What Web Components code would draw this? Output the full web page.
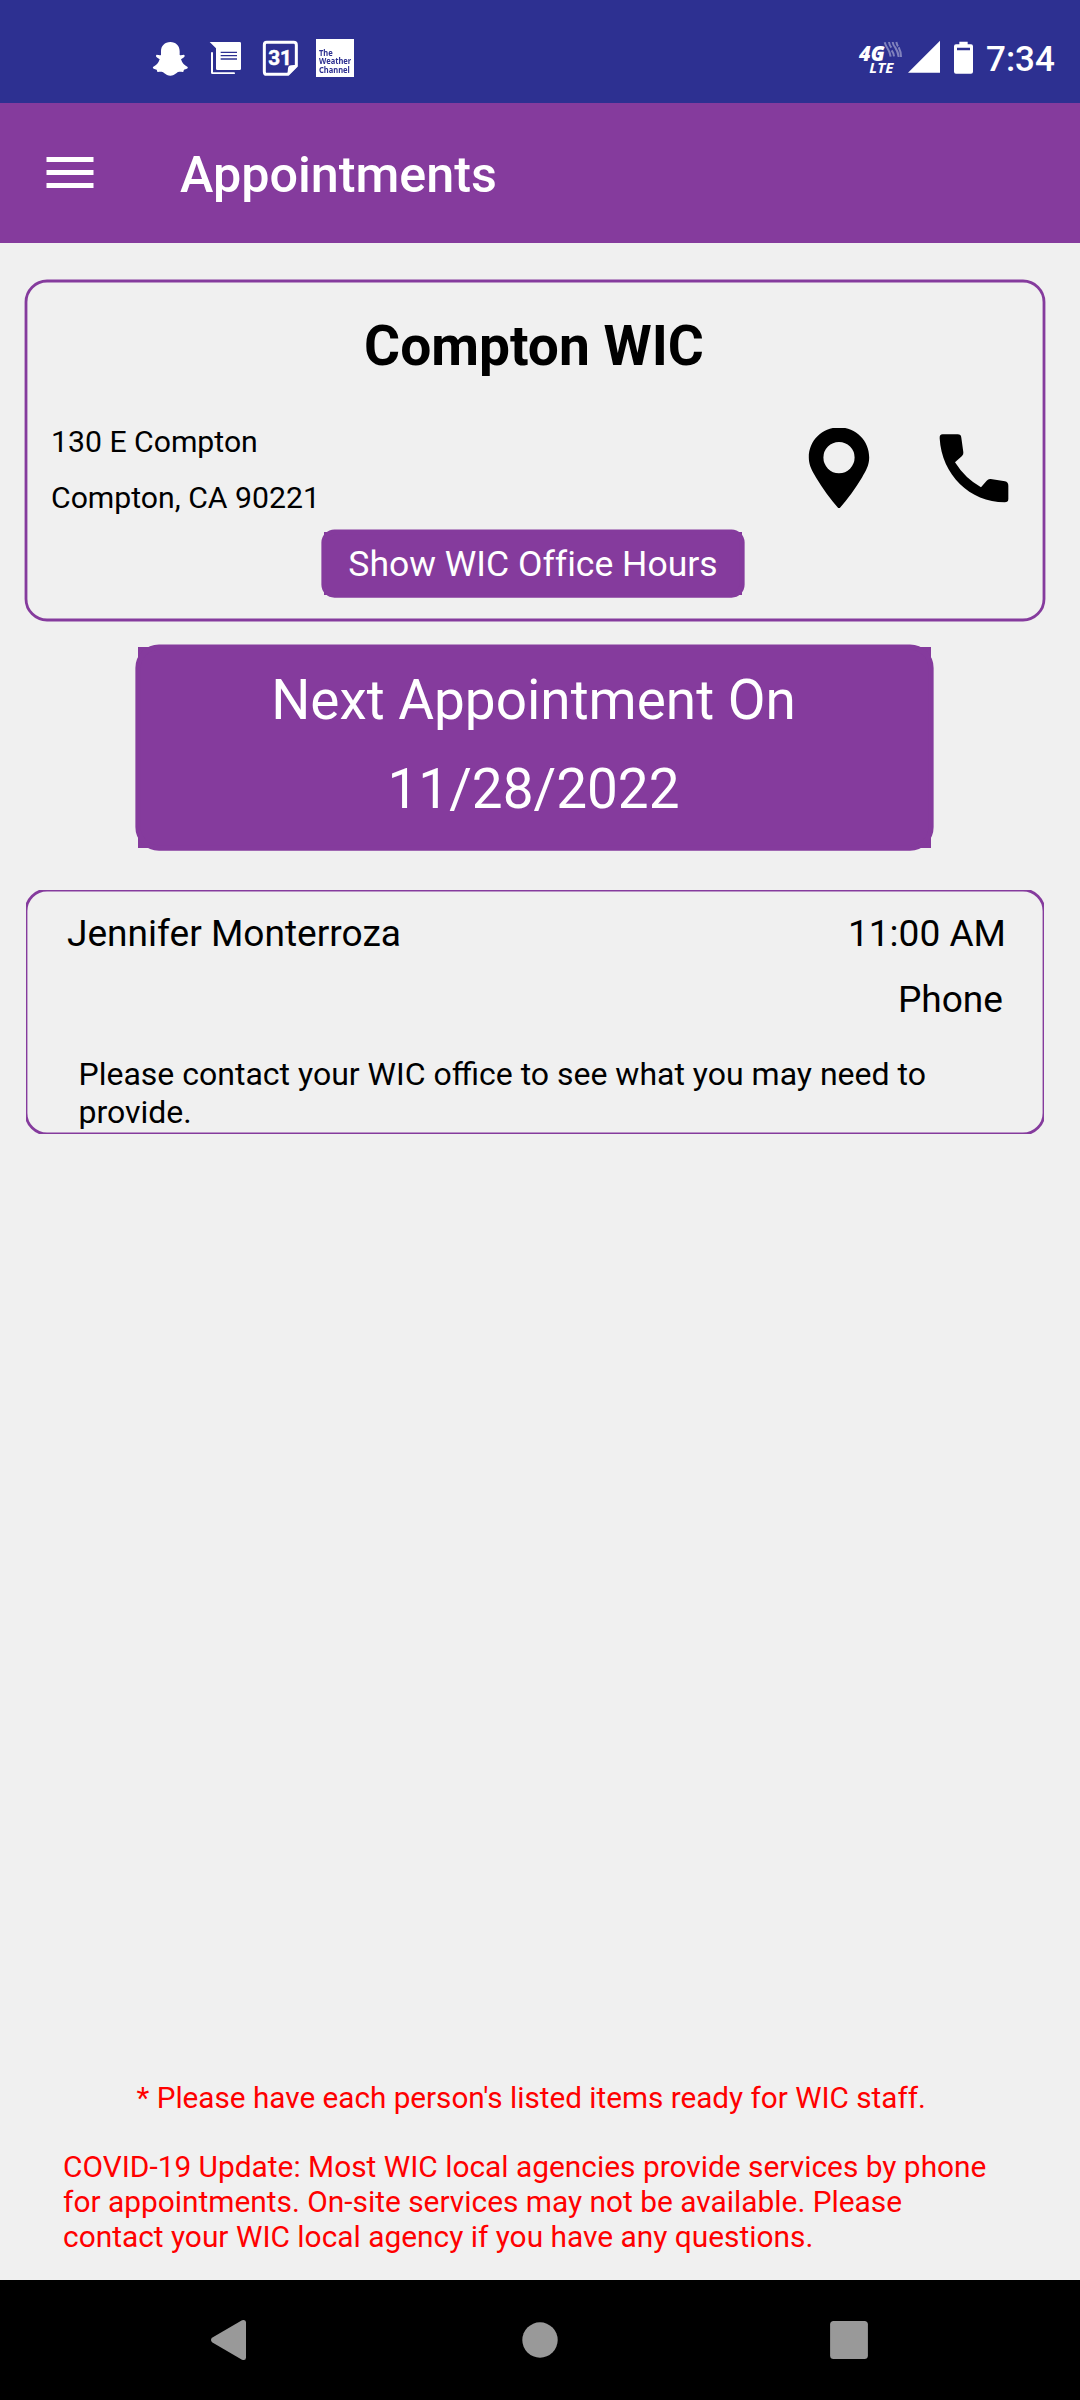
<!DOCTYPE html>
<html lang="en">
<head>
<meta charset="utf-8">
<title>Appointments</title>
<style>
html,body{margin:0;padding:0}
body{width:1080px;height:2400px;background:#f0f0f0;font-family:Roboto,sans-serif;color:#000;--brand:#853b9d;--status:#2d3091}
</style>
</head>
<body>
<wic-app></wic-app>
<script>
function define(name, html) {
  const tpl = document.createElement('template');
  tpl.innerHTML = html;
  customElements.define(name, class extends HTMLElement {
    constructor() {
      super();
      this.attachShadow({ mode: 'open' }).appendChild(tpl.content.cloneNode(true));
    }
  });
}

define('status-bar', `
<style>
:host{display:flex;align-items:flex-start;box-sizing:border-box;height:103px;padding:38px 25px 0 152px;background:var(--status);color:#fff;flex:none}
svg{display:block;height:40px;flex:none;fill:#fff}
.twc{box-sizing:border-box;width:38px;height:38px;margin:1px 0 0 18px;padding:10px 0 0 3.3px;background:#fff;color:var(--status);font:700 8.4px/8.4px "Noto Sans",sans-serif;white-space:nowrap}
.twc span{display:block;transform:scaleX(.9);transform-origin:0 0}
.grow{flex:1}
.clock{width:69px;margin-top:2px;font-weight:500;font-size:35px;line-height:40px;white-space:nowrap}
</style>
<svg width="37" viewBox="66 54 111 120"><path d="M121 66c17 0 28 12 28 28v11c4 2 9-1 13-1 4 2 2 7-2 9l-7 5c4 12 10 18 20 23 2 5-5 7-11 8-2 3 0 7-4 7-7 0-12-2-18 3-6 5-12 8-19 8s-13-3-19-8c-6-5-11-3-18-3-4 0-2-4-4-7-6-1-13-3-11-8 10-5 16-11 20-23l-7-5c-4-2-6-7-2-9 4 0 9 3 13 1V94c0-16 11-28 28-28z"/></svg>
<svg width="33" viewBox="237 54 99 120" style="margin-left:20px"><path fill-rule="evenodd" d="M239 66H329q4 0 4 4V146q0 4-4 4H262q-4 0-4-4V85zM272 95v4h49v-4zM272 105v4h49v-4zM272 115v4h49v-4z"/><path d="M243 99q0-3 3-3 3 0 3 3V157H312q3 0 3 2.500 0 2.500-3 2.500H247q-4 0-4-4z"/></svg>
<svg width="36" viewBox="396 54 108 120" style="margin-left:20px"><path d="M410 67H491q8 0 8 8V138L474 163H410q-7 0-7-8V75q0-8 7-8z" fill="none" stroke="#fff" stroke-width="9"/><path d="M472 165L474 145q1-9 10-9L501 134V140L476 165z"/><text x="450" y="136" text-anchor="middle" font-size="62" font-weight="700" font-family="Roboto" stroke="#fff" stroke-width="1.500">31</text></svg>
<div class="twc"><span>The</span><span>Weather</span><span>Channel</span></div>
<div class="grow"></div>
<svg width="46" viewBox="54 54 138 120"><g fill="none" stroke="#fff" stroke-width="6" opacity=".4"><path d="M134 67q2 8 8 17 8 12 10 26M147 66q1 9 7 17M155 91q6 8 7 18M158 66q1 9 8 17 8 12 10 28M169 66q2 9 5 13M176 82q7 13 7 29"/></g><text x="57" y="122" font-size="64" font-weight="800" font-style="italic" font-family="Open Sans" textLength="77" lengthAdjust="spacingAndGlyphs">4G</text><text x="88" y="159" font-size="44" font-weight="700" font-style="italic" font-family="Open Sans" textLength="72" lengthAdjust="spacingAndGlyphs">LTE</text></svg>
<svg width="34" viewBox="201 54 102 120" style="margin-left:3px"><path d="M204 158L300 62V158z"/></svg>
<svg width="21" viewBox="339 54 63 120" style="margin-left:12px"><path fill-rule="evenodd" d="M358 65H383V73H393q6 0 6 6V155q0 6-6 6H348q-6 0-6-6V79q0-6 6-6H358zM351 83V91H390V83z"/></svg>
<div class="clock" style="margin-left:12px">7:34</div>
`);

define('app-bar', `
<style>
:host{display:flex;align-items:center;box-sizing:border-box;height:140px;padding-left:46px;background:var(--brand);color:#fff;flex:none}
svg{display:block;flex:none}
h1{margin:4px 0 0 86px;font-size:50.3px;line-height:60px;font-weight:500;white-space:nowrap}
</style>
<svg width="48" height="32" viewBox="0 0 48 32"><path fill="#fff" d="M.5 0h47v5h-47zM.5 13h47v5h-47zM.5 26h47v5h-47z"/></svg>
<h1><slot></slot></h1>
`);

/* Rounded outline stroked along the centre of the host's edge. */
define('outline-card', `
<style>
:host{display:flex;flex-direction:column;box-sizing:border-box;width:1018px;position:relative;flex:none}
:host([clipped]){overflow:hidden}
svg{position:absolute;inset:0;width:100%;height:100%;overflow:visible;pointer-events:none}
</style>
<svg><rect width="100%" height="100%" rx="21" fill="none" stroke="var(--brand)" stroke-width="2.800"/></svg>
<slot></slot>
`);

define('purple-button', `
<style>
:host{display:flex;flex-direction:column;align-items:center;box-sizing:border-box;position:relative;background:var(--brand);color:#fff;white-space:nowrap;flex:none}
svg{position:absolute;inset:0;width:100%;height:100%;overflow:visible;pointer-events:none}
rect{rx:var(--r,10.5px)}
</style>
<svg><rect width="100%" height="100%" fill="none" stroke="var(--brand)" stroke-width="5.25"/></svg>
<slot></slot>
`);

define('office-card', `
<style>
:host{display:block;margin:38px 0 0 26px;flex:none}
outline-card{height:339px}
h2{margin:33px 0 0;text-align:center;font-size:55.1px;line-height:64px;font-weight:700;padding-right:2px}
.row{display:flex;align-items:flex-start;margin:36px 0 0 25px;height:112px}
.addr{width:755px;font-size:30.2px;line-height:56px;white-space:nowrap}
.addr div{height:56px}
svg{display:block;flex:none;overflow:visible}
.pin{margin:14px 0 0 1px;height:80px;overflow:hidden}
.phone{margin:19px 0 0 66.5px;filter:blur(.5px)}
purple-button{width:418px;height:63px;margin:6px auto 0 298px;font-size:35.55px;line-height:65px;font-variant-ligatures:none}
</style>
<outline-card>
<h2>Compton WIC</h2>
<div class="row">
<div class="addr"><div>130 E Compton</div><div>Compton, CA 90221</div></div>
<svg class="pin" width="64" height="80" viewBox="807 428 64 80"><path style="filter:blur(.5px)" fill-rule="evenodd" d="M839 427.500c17 0 30.200 13 30.200 30 0 8-3.500 13.500-7.200 20-6.500 11-14 21-23 31.500-9-10.500-16.500-20.500-23-31.500-3.700-6.500-7.200-12-7.200-20 0-17 13.200-30 30.200-30zM839 442a15.600 15.600 0 1 0 0 31.200 15.600 15.600 0 1 0 0-31.200z"/></svg>
<svg class="phone" width="72" height="72" viewBox="444 54 216 216"><path d="M458 58H503Q513 58 514 68L520 112Q521 118 516 123L495 142Q525 190 573 217L590 197Q595 191 602 192L645 199Q655 201 655 212V252Q655 262 644 262C540 262 455 180 449 70Q448 58 458 58Z"/></svg>
</div>
<purple-button>Show WIC Office Hours</purple-button>
</outline-card>
`);

define('next-appointment', `
<style>
:host{display:block;margin:27px 0 0 138px;flex:none}
purple-button{width:793px;height:201px;padding:9px 2px 0 0;--r:21px;font-size:54.9px;line-height:89px;font-variant-ligatures:none}
span{display:block}
</style>
<purple-button><span>Next Appointment On</span><span>11/28/2022</span></purple-button>
`);

define('appointment-item', `
<style>
:host{display:block;margin:42px 0 0 26px;flex:none}
outline-card{height:244px}
.row{display:flex;justify-content:space-between;margin:11px 38px 0 41px;font-size:37.1px;line-height:66px;height:66px;white-space:nowrap}
.row.kind{justify-content:flex-end;margin:0 41px 0 0}
p{margin:22px 0 0 52.500px;width:900px;font-size:32px;line-height:38px}
</style>
<outline-card clipped>
<div class="row"><slot name="who"></slot><slot name="time"></slot></div>
<div class="row kind"><slot name="kind"></slot></div>
<p><slot name="note"></slot></p>
</outline-card>
`);

define('page-notes', `
<style>
:host{display:block;margin-top:auto;padding:0 0 26px 63px;color:#f00;font-size:29.86px;line-height:35px;flex:none}
p{margin:0;width:940px}
.star{margin:0 0 34px 73.500px;font-size:29.7px}
</style>
<p class="star">* Please have each person's listed items ready for WIC staff.</p>
<p>COVID-19 Update: Most WIC local agencies provide services by phone for appointments. On-site services may not be available. Please contact your WIC local agency if you have any questions.</p>
`);

define('nav-bar', `
<style>
:host{display:flex;align-items:center;box-sizing:border-box;height:120px;padding-left:210px;background:#000;flex:none}
svg{display:block;fill:#999;flex:none}
</style>
<svg width="37" height="42" viewBox="0 0 37 42"><path d="M2 18.800L32 1.300Q36 0 36 3.500V38.500Q36 42 32 40.700L2 23.200Q0 21 2 18.800z"/></svg>
<svg width="36" height="36" viewBox="0 0 36 36" style="margin-left:275px"><circle cx="18" cy="18" r="17.700"/></svg>
<svg width="38" height="38" viewBox="0 0 38 38" style="margin-left:272px"><rect x=".1" y=".1" width="37.800" height="37.800" rx="3.500"/></svg>
`);

define('wic-app', `
<style>
:host{display:flex;flex-direction:column;width:1080px;height:2400px;background:#f0f0f0;overflow:hidden}
</style>
<status-bar></status-bar>
<app-bar>Appointments</app-bar>
<office-card></office-card>
<next-appointment></next-appointment>
<appointment-item>
<span slot="who">Jennifer Monterroza</span>
<span slot="time">11:00 AM</span>
<span slot="kind">Phone</span>
<span slot="note">Please contact your WIC office to see what you may need to provide.</span>
</appointment-item>
<page-notes></page-notes>
<nav-bar></nav-bar>
`);
</script>
</body>
</html>
